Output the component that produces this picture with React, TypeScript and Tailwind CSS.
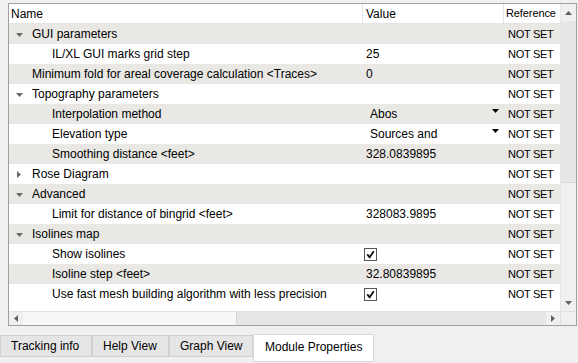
import React from "react";

type Row = {
  level: 0 | 1;
  name: string;
  expand?: "down" | "right";
  value?: string;
  combo?: boolean;
  check?: boolean;
};

const rows: Row[] = [
  { level: 0, expand: "down", name: "GUI parameters" },
  { level: 1, name: "IL/XL GUI marks grid step", value: "25" },
  { level: 0, name: "Minimum fold for areal coverage calculation <Traces>", value: "0" },
  { level: 0, expand: "down", name: "Topography parameters" },
  { level: 1, name: "Interpolation method", value: "Abos", combo: true },
  { level: 1, name: "Elevation type", value: "Sources and", combo: true },
  { level: 1, name: "Smoothing distance <feet>", value: "328.0839895" },
  { level: 0, expand: "right", name: "Rose Diagram" },
  { level: 0, expand: "down", name: "Advanced" },
  { level: 1, name: "Limit for distance of bingrid <feet>", value: "328083.9895" },
  { level: 0, expand: "down", name: "Isolines map" },
  { level: 1, name: "Show isolines", check: true },
  { level: 1, name: "Isoline step <feet>", value: "32.80839895" },
  { level: 1, name: "Use fast mesh building algorithm with less precision", check: true },
];

function Arrow({ dir }: { dir: "down" | "right" }) {
  if (dir === "down")
    return (
      <svg width="7" height="4" viewBox="0 0 7 4" className="block">
        <path d="M0 0 H7 L3.5 4 Z" fill="#6a6a6a" />
      </svg>
    );
  return (
    <svg width="4" height="7" viewBox="0 0 4 7" className="block">
      <path d="M0 0 V7 L4 3.5 Z" fill="#6a6a6a" />
    </svg>
  );
}

function Check() {
  return (
    <div className="w-[13px] h-[13px] border border-[#555555] bg-white flex items-center justify-center">
      <svg width="9" height="9" viewBox="0 0 9 9">
        <path d="M1.3 4.4 L3.6 7.3 L7.8 1.2" stroke="#000" strokeWidth="1.7" fill="none" />
      </svg>
    </div>
  );
}

function TableRow({ r, i }: { r: Row; i: number }) {
  const bg = i % 2 === 0 ? "bg-[#e9e8e5]" : "bg-white";
  return (
    <div className={`flex h-[20px] items-center ${bg} whitespace-nowrap`}>
      <div className="w-[354px] shrink-0 flex items-center h-full">
        <div className="w-[23px] shrink-0 flex items-center pl-[7px]">
          {r.level === 0 && r.expand ? (
            r.expand === "down" ? (
              <div className="pt-[1px]"><Arrow dir="down" /></div>
            ) : (
              <div className="pl-[1px]"><Arrow dir="right" /></div>
            )
          ) : null}
        </div>
        {r.level === 1 && <div className="w-[20px] shrink-0" />}
        <span>{r.name}</span>
      </div>
      <div className="w-[141px] shrink-0 h-full flex items-center relative">
        {r.check ? (
          <div className="pl-[1px]"><Check /></div>
        ) : r.combo ? (
          <>
            <span className="pl-[7px]">{r.value}</span>
            <div className="absolute left-[129px] top-[5px]">
              <svg width="7" height="4" viewBox="0 0 7 4" className="block">
                <path d="M0 0 H7 L3.5 4 Z" fill="#000" />
              </svg>
            </div>
          </>
        ) : (
          <span className="pl-[3px]">{r.value ?? ""}</span>
        )}
      </div>
      <div className="flex-1 pl-[4px] overflow-hidden text-[11px] tracking-[-0.3px]">NOT SET</div>
    </div>
  );
}

function Tab({ label, active, w }: { label: string; active?: boolean; w: string }) {
  if (active)
    return (
      <div className={`${w} h-[28px] -mt-[1px] bg-white border border-[#d9d9d9] flex items-center pl-[11px] pb-[2px]`}>
        {label}
      </div>
    );
  return (
    <div className={`${w} h-[22px] bg-[#e5e5e5] border border-[#d0d0d0] flex items-center pl-[10px]`}>
      {label}
    </div>
  );
}

export default function App() {
  return (
    <div
      className="w-[578px] h-[363px] bg-[#f0f0f0] overflow-hidden text-[12px] text-black leading-none"
      style={{ fontFamily: "'Liberation Sans', Arial, sans-serif" }}
    >
      <div className="pt-[3px] pl-[8px] pr-[1px]">
        <div className="border border-[#a0a0a0] h-[323px] flex flex-col bg-white">
          <div className="flex h-[307px]">
            <div className="flex-1 overflow-hidden">
              <div className="flex h-[20px] border-b border-[#e5e5e5] bg-white whitespace-nowrap">
                <div className="w-[354px] shrink-0 flex items-center pl-[2px] border-r border-[#e5e5e5]">Name</div>
                <div className="w-[141px] shrink-0 flex items-center pl-[3px] border-r border-[#e5e5e5]">Value</div>
                <div className="flex-1 flex items-center pl-[2px] overflow-hidden text-[11px] tracking-[-0.1px]">Reference</div>
              </div>
              {rows.map((r, i) => (
                <TableRow key={i} r={r} i={i} />
              ))}
            </div>
            <div className="w-[16px] shrink-0 bg-[#f0f0f0] flex flex-col border-l border-[#e6e6e6]">
              <div className="h-[17px] flex items-center justify-center">
                <svg width="7" height="4" viewBox="0 0 7 4"><path d="M0 4 H7 L3.5 0 Z" fill="#606060" /></svg>
              </div>
              <div className="h-[162px] bg-[#e6e6e6] border-b border-[#d6d6d6]" />
              <div className="flex-1" />
              <div className="h-[17px] flex items-center justify-center">
                <svg width="7" height="4" viewBox="0 0 7 4"><path d="M0 0 H7 L3.5 4 Z" fill="#606060" /></svg>
              </div>
            </div>
          </div>
          <div className="flex h-[14px] border-t border-[#e0e0e0]">
            <div className="flex-1 flex bg-[#e6e6e6]">
              <div className="w-[14px] flex items-center justify-center bg-[#f0f0f0]">
                <svg width="4" height="7" viewBox="0 0 4 7"><path d="M4 0 V7 L0 3.5 Z" fill="#606060" /></svg>
              </div>
              <div className="w-[214px] bg-[#f7f7f7] border-r border-[#d6d6d6]" />
              <div className="flex-1" />
              <div className="w-[14px] flex items-center justify-center bg-[#f0f0f0]">
                <svg width="4" height="7" viewBox="0 0 4 7"><path d="M0 0 V7 L4 3.5 Z" fill="#606060" /></svg>
              </div>
            </div>
            <div className="w-[16px] bg-[#f0f0f0] border-l border-[#e0e0e0]" />
          </div>
        </div>
      </div>
      <div className="flex items-start pt-[9px] pl-0">
        <Tab label="Tracking info" w="w-[92px]" />
        <Tab label="Help View" w="w-[77px]" />
        <Tab label="Graph View" w="w-[84px]" />
        <Tab label="Module Properties" w="w-[121px]" active />
      </div>
    </div>
  );
}
